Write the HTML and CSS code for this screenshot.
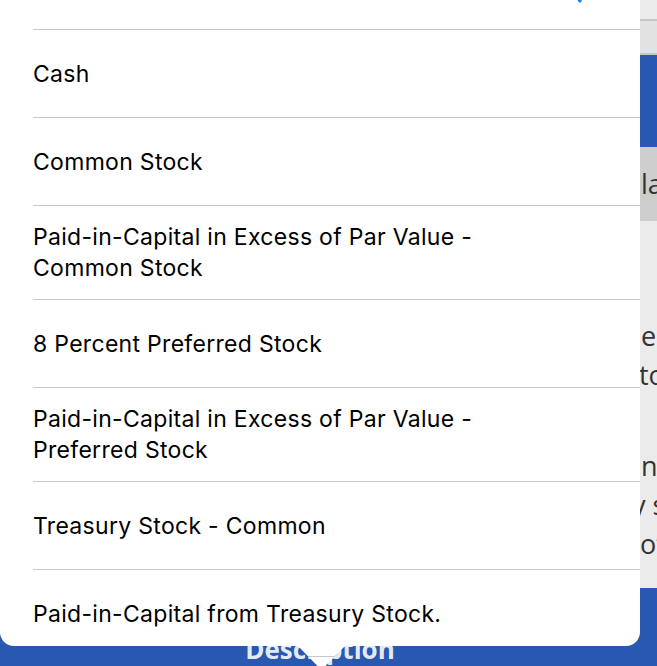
FILE: index.html
```html
<!DOCTYPE html>
<html lang="en">
<head>
<meta charset="utf-8">
<title>Account picker</title>
<link rel="stylesheet" href="styles.css">
</head>
<body>
<div class="page">
  <div class="band band-top1"></div>
  <div class="band band-top2"></div>
  <div class="band band-blue"></div>
  <div class="band band-head"><div class="bg-line">la</div></div>
  <div class="band band-body">
    <div class="para">
      <div class="bg-line">e</div>
      <div class="bg-line shift-2">to</div>
    </div>
    <div class="para">
      <div class="bg-line">n</div>
      <div class="bg-line shift-9">y s</div>
      <div class="bg-line shift-1">ot</div>
    </div>
  </div>
  <div class="band band-footer"><span class="footer-title">Description</span></div>
</div>

<div class="popover">
  <ul class="list">
    <li class="row"><div class="cell cell-check">
      <svg class="check" width="20" height="34" viewBox="0 0 20 34"><path d="M2 21 L10 32 L18 3" fill="none" stroke="#1a7cf5" stroke-width="3" stroke-linecap="round" stroke-linejoin="round"/></svg>
    </div></li>
    <li class="row"><div class="cell"><span class="label">Cash</span></div></li>
    <li class="row"><div class="cell"><span class="label">Common Stock</span></div></li>
    <li class="row"><div class="cell"><span class="label">Paid-in-Capital in Excess of Par Value - Common Stock</span></div></li>
    <li class="row"><div class="cell"><span class="label">8 Percent Preferred Stock</span></div></li>
    <li class="row"><div class="cell"><span class="label">Paid-in-Capital in Excess of Par Value - Preferred Stock</span></div></li>
    <li class="row"><div class="cell"><span class="label">Treasury Stock - Common</span></div></li>
    <li class="row"><div class="cell"><span class="label">Paid-in-Capital from Treasury Stock.</span></div></li>
  </ul>
</div>
<div class="arrow"></div>
</body>
</html>
```
FILE: styles.css
```css
html, body {
  margin: 0;
  padding: 0;
}
body {
  width: 657px;
  height: 666px;
  overflow: hidden;
  position: relative;
  background: #ebebeb;
  font-family: "Inter", "Liberation Sans", sans-serif;
}

/* ---------- background page ---------- */
.page {
  display: flex;
  flex-direction: column;
  font-family: "Open Sans", "Liberation Sans", sans-serif;
  font-size: 27px;
  color: #333;
}
.band {
  overflow: hidden;
  white-space: nowrap;
}
.band-top1 {
  height: 19px;
  background: #ebebeb;
}
.band-top2 {
  height: 32px;
  background: #e2e2e2;
  border-top: 2px solid #c6c6c6;
  border-bottom: 2px solid #c6c6c6;
}
.band-blue {
  height: 92px;
  background: #2858b0;
}
.band-head {
  height: 74px;
  background: #cecece;
  line-height: 74px;
}
.band-body {
  height: 367px;
  background: #ebebeb;
  padding-top: 95px;
  box-sizing: border-box;
  line-height: 39px;
  display: flex;
  flex-direction: column;
  gap: 52px;
}
.bg-line {
  padding-left: 641px;
}
.shift-1 { padding-left: 640px; }
.shift-2 { padding-left: 639px; }
.shift-9 { padding-left: 632px; }

.band-footer {
  height: 78px;
  background: #2858b0;
  box-sizing: border-box;
  padding-top: 42px;
  padding-right: 17px;
  text-align: center;
  line-height: normal;
}
.footer-title {
  font-weight: 700;
  font-size: 26px;
  color: rgba(255, 255, 255, 0.9);
}

/* ---------- popover ---------- */
.popover {
  position: absolute;
  left: 0;
  top: -58px;
  width: 640px;
  height: 704px;
  background: #ffffff;
  border-radius: 0 0 14px 14px;
  overflow: hidden;
}
.list {
  list-style: none;
  margin: 0;
  padding: 0;
}
.row {
  padding-left: 33px;
}
.cell {
  box-sizing: border-box;
  min-height: 88px;
  padding: 16px 0 15px;
  border-bottom: 1px solid #c8c7cc;
  display: flex;
  align-items: center;
}
.label {
  max-width: 500px;
  font-size: 23px;
  line-height: 31px;
  color: #000;
  letter-spacing: 0.3px;
}
.cell-check {
  justify-content: flex-end;
  padding-right: 50px;
}
.check {
  display: block;
}

/* ---------- popover arrow ---------- */
.arrow {
  position: absolute;
  left: 298px;
  top: 646px;
  width: 47px;
  height: 24px;
  clip-path: polygon(0 0, 100% 0, 50% 100%);
  background: linear-gradient(to bottom, #ffffff 10px, #c8c7cc 10px, #c8c7cc 11px, #ffffff 11px);
}
```
